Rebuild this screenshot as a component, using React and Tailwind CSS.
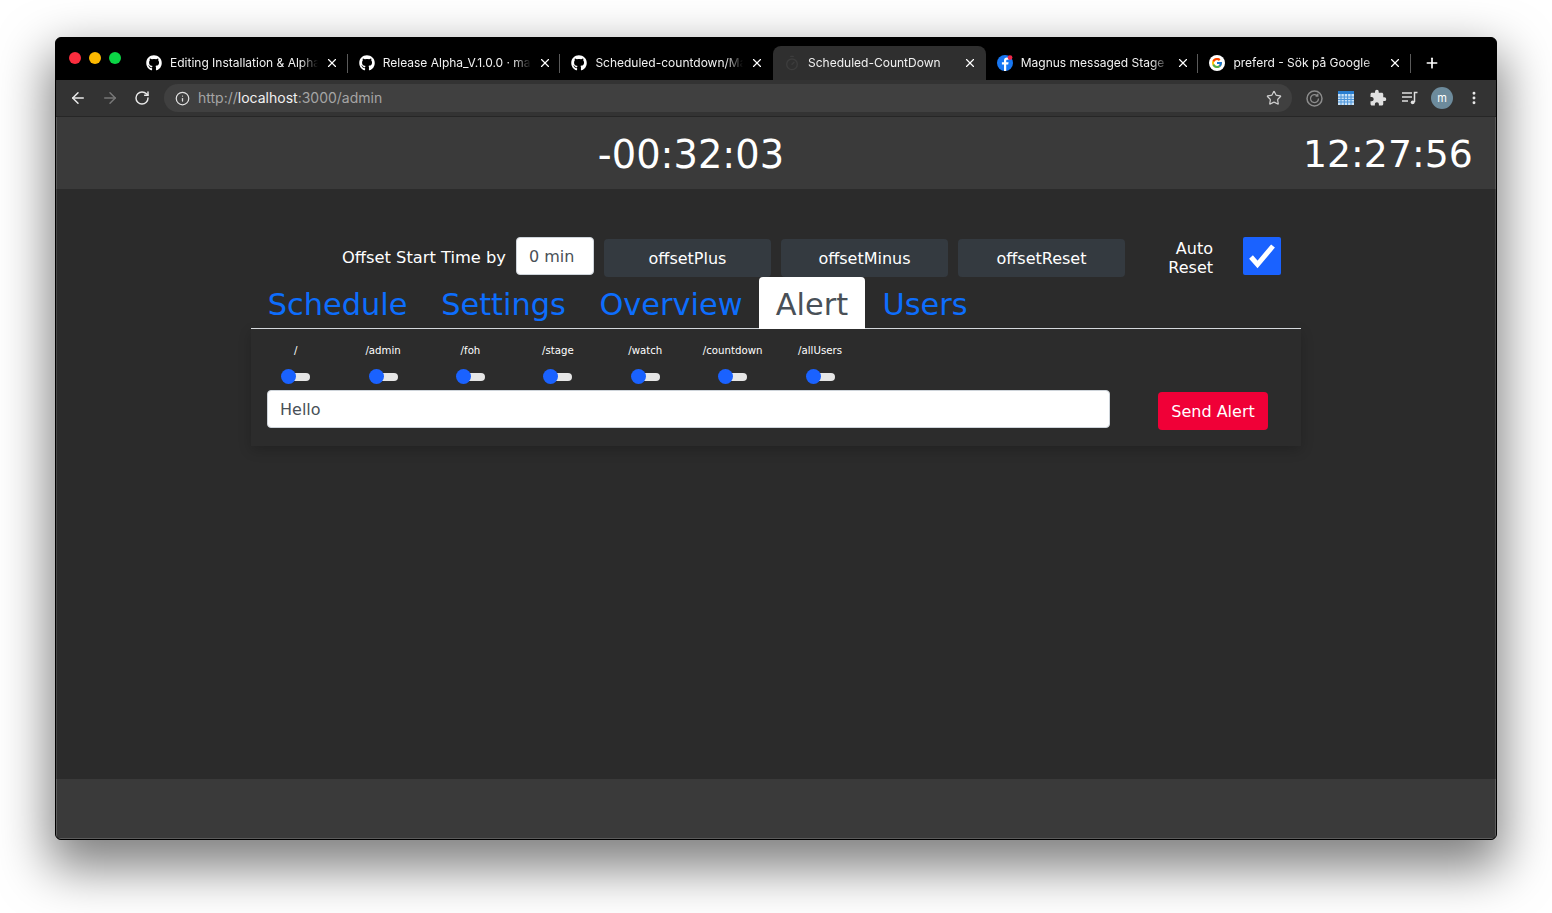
import React from 'react';
import { ArrowLeft, ArrowRight, RotateCw, Info, Star, MoreVertical, Plus, X, Timer } from 'lucide-react';
import { FaGithub } from 'react-icons/fa';
import { FcGoogle } from 'react-icons/fc';
import { MdExtension } from 'react-icons/md';

const FacebookIcon = () => (
  <svg width="16" height="16" viewBox="0 0 16 16">
    <circle cx="8" cy="8" r="8" fill="#1877f2" />
    <path d="M9.2 16V9.6h2l.4-2.3H9.2V5.900c0-.8.3-1.2 1.2-1.2h1.3V2.600c-.4 0-1-.1-1.7-.1-1.900 0-3 1.100-3 3v1.800H4.900v2.300H7V16z" fill="#fff" />
    <circle cx="13" cy="2.600" r="2.400" fill="#f02849" />
  </svg>
);

const CalendarIcon = () => (
  <svg width="16" height="14" viewBox="0 0 16 14">
    <rect width="16" height="14" fill="#c9e2f7" />
    <rect width="16" height="3" fill="#2a7fd1" />
    <path d="M0 6h16M0 8.500h16M0 11h16M3 3v11M6.300 3v11M9.600 3v11M13 3v11" stroke="#4a94da" strokeWidth="1" fill="none" />
  </svg>
);

const RingIcon = () => (
  <svg width="17" height="17" viewBox="0 0 17 17" fill="none" stroke="#8c8c8c">
    <circle cx="8.500" cy="8.500" r="7.500" strokeWidth="1.500" />
    <path d="M12.500 8.500a4 4 0 1 1-1.200-2.800M11.800 3.800v2.200H9.600" strokeWidth="1.300" />
  </svg>
);

const QueueIcon = () => (
  <svg width="16" height="14" viewBox="0 0 16 14" fill="none" stroke="#e0e0e0" strokeWidth="1.500">
    <path d="M0 2h10M0 6h10M0 10h6" />
    <path d="M12.500 11V1.500h3" />
    <circle cx="10.700" cy="11.300" r="1.900" fill="#e0e0e0" stroke="none" />
  </svg>
);

const browserTabs = [
  { title: 'Editing Installation & Alpha', icon: <FaGithub className="w-4 h-4 text-white" />, sep: true },
  { title: 'Release Alpha_V.1.0.0 · magnus', icon: <FaGithub className="w-4 h-4 text-white" />, sep: true },
  { title: 'Scheduled-countdown/Main', icon: <FaGithub className="w-4 h-4 text-white" />, sep: false },
  { title: 'Scheduled-CountDown', icon: <Timer className="w-4 h-4 text-[#3d3d3d]" />, active: true, sep: false },
  { title: 'Magnus messaged Stage - Face', icon: <FacebookIcon />, sep: true },
  {
    title: 'preferd - Sök på Google',
    icon: (
      <span className="w-4 h-4 rounded-full bg-white flex items-center justify-center">
        <FcGoogle className="w-3 h-3" />
      </span>
    ),
    sep: true,
  },
];

const routes = ['/', '/admin', '/foh', '/stage', '/watch', '/countdown', '/allUsers'];
const offsetButtons = ['offsetPlus', 'offsetMinus', 'offsetReset'];
const pageTabs = [
  { label: 'Schedule', width: 'w-[173px]' },
  { label: 'Settings', width: 'w-[159px]' },
  { label: 'Overview', width: 'w-[176px]' },
  { label: 'Alert', width: 'w-[106px]', active: true },
  { label: 'Users', width: 'w-[118px] pl-[2px]' },
];

const BrowserTab = ({ tab }) => (
  <div className={`relative flex items-center w-[212.7px] h-[34px] pl-[11px] ${tab.active ? 'bg-[#2f2f2f] rounded-t-[8px]' : ''}`}>
    <span className="w-4 h-4 flex items-center justify-center shrink-0">{tab.icon}</span>
    <span className="ml-[8px] w-[148px] overflow-hidden whitespace-nowrap text-[12px] text-[#f1f1f1] [mask-image:linear-gradient(to_right,black_88%,transparent)]">
      {tab.title}
    </span>
    <X className="ml-[7px] w-[14px] h-[14px] text-white shrink-0" strokeWidth={2} />
    {tab.sep && <span className="absolute right-0 top-[8px] w-px h-[19px] bg-[#5a5a5a]" />}
  </div>
);

const ToolbarButton = ({ children }) => (
  <div className="w-8 h-full flex items-center justify-center shrink-0">{children}</div>
);

const RouteToggle = ({ route }) => (
  <div className="w-[87.4px] flex flex-col items-center">
    <div className="text-[10.2px] leading-[13px] text-white">{route}</div>
    <div className="mt-[12px] flex items-center w-[29px]">
      <span className="relative w-[15px] h-[15px] rounded-full bg-[#1a62ff] shrink-0" />
      <span className="w-[18px] -ml-[4px] h-[8px] rounded-r-full bg-[#e6e6e6]" />
    </div>
  </div>
);

export default function App() {
  return (
    <div className="min-h-[913px] bg-white pt-[37px] pl-[55px] overflow-hidden font-['DejaVu_Sans',sans-serif]">
      <div className="w-[1442px] h-[803px] flex flex-col border border-black rounded-[6px] overflow-hidden shadow-[0_22px_50px_6px_rgba(0,0,0,0.5)] bg-black">
        {/* tab strip */}
        <div className="h-[42px] shrink-0 flex items-end bg-black font-['Inter',sans-serif]">
          <div className="h-full flex items-center pl-[13px] gap-[8px] pb-[2px]">
            <span className="w-3 h-3 rounded-full bg-[#fb2d3e]" />
            <span className="w-3 h-3 rounded-full bg-[#fdb900]" />
            <span className="w-3 h-3 rounded-full bg-[#0bd545]" />
          </div>
          <div className="ml-[14px] flex items-end">
            {browserTabs.map((tab) => (
              <BrowserTab key={tab.title} tab={tab} />
            ))}
          </div>
          <div className="h-[34px] flex items-center ml-[13px]">
            <Plus className="w-[16px] h-[16px] text-white" strokeWidth={2.5} />
          </div>
        </div>

        {/* toolbar */}
        <div className="h-[37px] shrink-0 flex items-center pl-[6px] bg-[#333333] border-b border-[#262626] font-['Inter',sans-serif]">
          <ToolbarButton><ArrowLeft className="w-[18px] h-[18px] text-[#e8e8e8]" strokeWidth={2} /></ToolbarButton>
          <ToolbarButton><ArrowRight className="w-[18px] h-[18px] text-[#777777]" strokeWidth={2} /></ToolbarButton>
          <ToolbarButton><RotateCw className="w-[16px] h-[16px] text-[#e8e8e8]" strokeWidth={2.2} /></ToolbarButton>
          <div className="ml-[6px] w-[1128px] h-[28px] rounded-full bg-[#404040] flex items-center pl-[11px] pr-[10px]">
            <Info className="w-[15px] h-[15px] text-[#e0e0e0] shrink-0" strokeWidth={2} />
            <span className="ml-[8px] -mt-[2px] text-[14px] text-[#a5a5a5] whitespace-nowrap">
              http://<span className="text-[#f1f1f1]">localhost</span>:3000/admin
            </span>
            <Star className="ml-auto w-[16px] h-[16px] text-[#cfcfcf]" strokeWidth={1.8} />
          </div>
          <div className="ml-[6px] h-full flex items-center">
            <ToolbarButton><RingIcon /></ToolbarButton>
            <ToolbarButton><CalendarIcon /></ToolbarButton>
            <ToolbarButton><MdExtension className="w-[18px] h-[18px] text-[#e0e0e0]" /></ToolbarButton>
            <ToolbarButton><QueueIcon /></ToolbarButton>
            <ToolbarButton>
              <span className="w-[22px] h-[22px] rounded-full bg-[#6d8b9c] text-white text-[11px] flex items-center justify-center">m</span>
            </ToolbarButton>
            <ToolbarButton><MoreVertical className="w-[16px] h-[16px] text-[#e8e8e8]" strokeWidth={2.4} /></ToolbarButton>
          </div>
        </div>

        {/* clock header */}
        <div className="h-[72px] shrink-0 flex items-center pt-[3px] bg-[#3a3a3a] text-white text-[38.4px] border-x border-[#555555]">
          <div className="flex-1 text-center pl-[22px]">-00:32:03</div>
          <div className="w-[192px] pr-[24px] text-right whitespace-nowrap text-[37.8px]">12:27:56</div>
        </div>

        {/* page */}
        <div className="flex-1 bg-[#2b2b2b] pt-[48px] pl-[194px] border-x border-[#444444]">
          <div className="w-[1050px]">
            <div className="flex h-[40px] text-white">
              <div className="w-[255px] pt-px text-right text-[16.3px] leading-[40px]">Offset Start Time by</div>
              <div className="ml-[10px] w-[78px] h-[38px] bg-white border border-[#ced4da] rounded-[4px] text-[#495057] text-[16px] leading-[38px] pl-[12px]">0 min</div>
              {offsetButtons.map((label) => (
                <button key={label} className="ml-[10px] mt-[2px] w-[167px] h-[38px] pt-px rounded-[4px] bg-[#343a40] text-[16px] text-white">
                  {label}
                </button>
              ))}
              <div className="ml-[10px] w-[78px] pt-[2px] text-right text-[16px] leading-[19px]">Auto<br />Reset</div>
              <div className="ml-[30px] w-[38px] h-[38px] rounded-[2px] bg-[#1a62ff] flex items-center justify-center">
                <svg width="38" height="38" viewBox="0 0 38 38" fill="none">
                  <path d="M8 20l6.500 7.500L30 9" stroke="#fff" strokeWidth="5" />
                </svg>
              </div>
            </div>

            <div className="flex h-[52px] border-b border-[#dee2e6]">
              {pageTabs.map((tab) => (
                <div
                  key={tab.label}
                  className={`${tab.width} h-[52px] text-center text-[30.4px] leading-[56px] ${tab.active ? 'bg-white text-[#495057] rounded-t-[4px]' : 'text-[#0d6efd]'}`}
                >
                  {tab.label}
                </div>
              ))}
            </div>

            <div className="h-[117px] bg-[#2c2c2c] shadow-[0_4px_12px_rgba(0,0,0,0.2)] pt-[15px]">
              <div className="flex pl-px">
                {routes.map((route) => (
                  <RouteToggle key={route} route={route} />
                ))}
              </div>
              <div className="mt-[6px] pl-[16px] flex items-start">
                <div className="w-[843px] h-[38px] bg-white border border-[#ced4da] rounded-[4px] text-[#495057] text-[16px] leading-[38px] pl-[12px]">Hello</div>
                <button className="ml-[48px] mt-[2px] w-[110px] h-[38px] pt-px rounded-[4px] bg-[#f00037] text-white text-[16px]">Send Alert</button>
              </div>
            </div>
          </div>
        </div>

        {/* footer */}
        <div className="h-[60px] shrink-0 bg-[#3a3a3a] border-x border-b border-[#5c5c5c]" />
      </div>
    </div>
  );
}
